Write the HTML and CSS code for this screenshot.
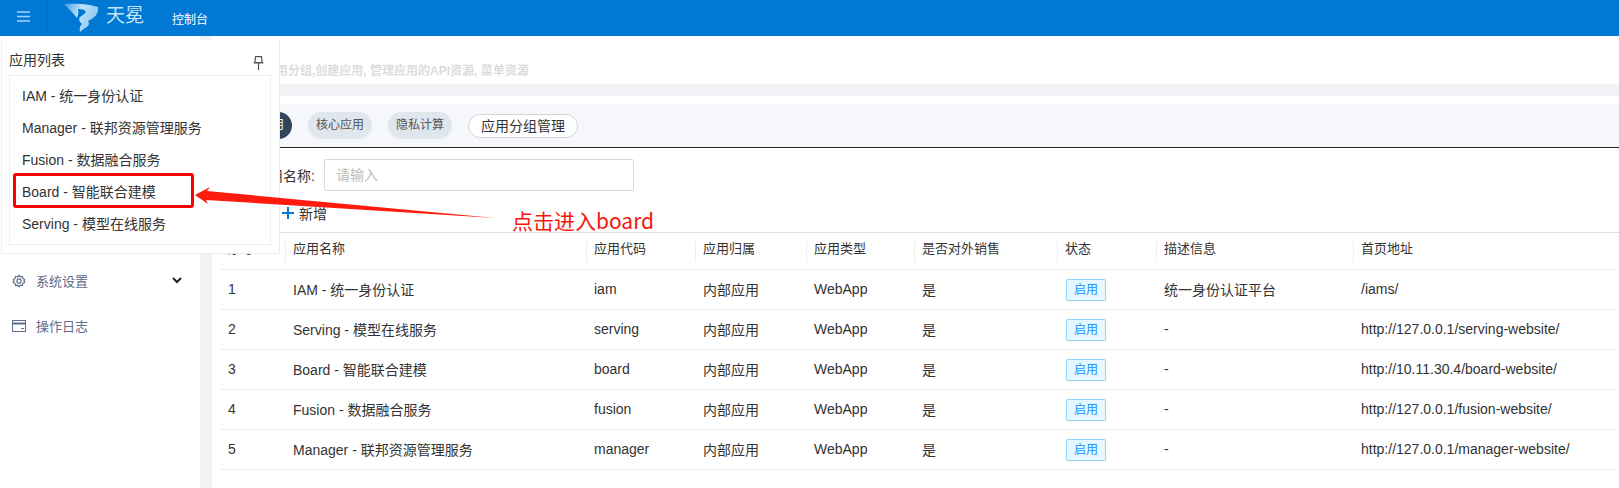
FILE: index.html
```html
<!DOCTYPE html>
<html lang="zh-CN">
<head>
    <meta charset="UTF-8">
    <title>应用管理</title>
    <link rel="stylesheet" href="styles.css">
</head>
<body>
    <header class="topbar">
        <div class="menu-btn">
            <svg width="13" height="11" viewBox="0 0 13 11"><path d="M0 1h13M0 5.500h13M0 10h13" stroke="#a9d3f3" stroke-width="1.300" fill="none"/></svg>
        </div>
        <div class="logo">
            <svg width="36" height="30" viewBox="0 0 36 30">
                <defs>
                    <linearGradient id="swirl" x1="0" y1="0" x2="1" y2="0.400">
                        <stop offset="0" stop-color="#3f9fe4"/>
                        <stop offset="0.500" stop-color="#bfe2f8"/>
                        <stop offset="1" stop-color="#8cc8f0"/>
                    </linearGradient>
                </defs>
                <path d="M0 1 C12 0 26 1 34 4 C35 10 31 15 24 18 C26 20 25 22 23 24 C20 26 18 27 16 29 C15 25 16 23 18 21 C16 19 14 17 16 14 C20 11 24 9 20 7 C18 6 16 6 14 6 C15 9 14 12 13 15 C9 10 4 5 0 1 Z" fill="url(#swirl)"/>
            </svg>
            <span class="logo-text">天冕</span>
        </div>
        <span class="console">控制台</span>
    </header>

    <div class="layout">
        <aside class="sidebar">
            <div class="side-item">
                <svg width="14" height="14" viewBox="0 0 24 24"><circle cx="12" cy="12" r="3.600" fill="none" stroke="#5f6c8c" stroke-width="2"/><path d="M12 2l2.200 3 3.600-.8 1 3.600 3.200 2-1.600 2.200 1.600 2.200-3.200 2-1 3.600-3.600-.8-2.200 3-2.200-3-3.600.8-1-3.600-3.200-2 1.600-2.200-1.600-2.200 3.200-2 1-3.600 3.600.8z" fill="none" stroke="#5f6c8c" stroke-width="2" stroke-linejoin="round"/></svg>
                <span>系统设置</span>
                <svg class="chev" width="10" height="7" viewBox="0 0 10 7"><path d="M1 1l4 4 4-4" fill="none" stroke="#222" stroke-width="2"/></svg>
            </div>
            <div class="side-item">
                <svg width="14" height="12" viewBox="0 0 14 12"><rect x=".5" y=".5" width="13" height="11" fill="none" stroke="#5f6c8c"/><path d="M0 3.500h14" stroke="#5f6c8c" stroke-width="2"/><path d="M9 8.500h3" stroke="#5f6c8c"/></svg>
                <span>操作日志</span>
            </div>
        </aside>

        <main class="content">
            <p class="desc">管理应用分组,创建应用, 管理应用的API资源, 菜单资源</p>
            <div class="band"></div>
            <div class="tabs">
                <span class="pill pill-active">全部应用</span>
                <span class="pill">核心应用</span>
                <span class="pill">隐私计算</span>
                <span class="pill-manage">应用分组管理</span>
            </div>
            <div class="search">
                <label>应用名称:</label>
                <div class="input">请输入</div>
            </div>
            <div class="toolbar">
                <svg width="12" height="12" viewBox="0 0 12 12"><path d="M6 0v12M0 6h12" stroke="#0078d4" stroke-width="2"/></svg>
                <span>新增</span>
            </div>
            <table class="app-table">
                <thead>
                    <tr>
                        <th class="c-no">序号</th><th class="c-name">应用名称</th><th class="c-code">应用代码</th><th class="c-own">应用归属</th><th class="c-type">应用类型</th><th class="c-sale">是否对外销售</th><th class="c-state">状态</th><th class="c-desc">描述信息</th><th>首页地址</th>
                    </tr>
                </thead>
                <tbody>
                    <tr><td>1</td><td>IAM - 统一身份认证</td><td>iam</td><td>内部应用</td><td>WebApp</td><td>是</td><td class="c-tag"><span class="tag">启用</span></td><td>统一身份认证平台</td><td>/iams/</td></tr>
                    <tr><td>2</td><td>Serving - 模型在线服务</td><td>serving</td><td>内部应用</td><td>WebApp</td><td>是</td><td class="c-tag"><span class="tag">启用</span></td><td>-</td><td>http://127.0.0.1/serving-website/</td></tr>
                    <tr><td>3</td><td>Board - 智能联合建模</td><td>board</td><td>内部应用</td><td>WebApp</td><td>是</td><td class="c-tag"><span class="tag">启用</span></td><td>-</td><td>http://10.11.30.4/board-website/</td></tr>
                    <tr><td>4</td><td>Fusion - 数据融合服务</td><td>fusion</td><td>内部应用</td><td>WebApp</td><td>是</td><td class="c-tag"><span class="tag">启用</span></td><td>-</td><td>http://127.0.0.1/fusion-website/</td></tr>
                    <tr><td>5</td><td>Manager - 联邦资源管理服务</td><td>manager</td><td>内部应用</td><td>WebApp</td><td>是</td><td class="c-tag"><span class="tag">启用</span></td><td>-</td><td>http://127.0.0.1/manager-website/</td></tr>
                </tbody>
            </table>
        </main>
    </div>

    <!-- 悬浮的应用列表 -->
    <div class="app-popup">
        <div class="popup-head">
            <span>应用列表</span>
            <svg class="pin" width="11" height="14" viewBox="0 0 11 14"><path d="M2.500 .7h6l.6 5.800H1.900zM.5 7h10M5.500 7v7" fill="none" stroke="#555" stroke-width="1.200"/></svg>
        </div>
        <ul class="popup-list">
            <li>IAM - 统一身份认证</li>
            <li>Manager - 联邦资源管理服务</li>
            <li>Fusion - 数据融合服务</li>
            <li>Board - 智能联合建模</li>
            <li>Serving - 模型在线服务</li>
        </ul>
    </div>

    <!-- 截图上的标注 -->
    <div class="mark-box"></div>
    <svg class="mark-arrow" width="302" height="36" viewBox="0 0 302 36">
        <path d="M0 10 L15 2 L12 6 L300 33 L11 15 L13 19 Z" fill="#ff1a0f"/>
    </svg>
    <span class="mark-text">点击进入board</span>
</body>
</html>
```

FILE: styles.css
```css
* {
    box-sizing: border-box;
}

body {
    margin: 0;
    height: 488px;
    overflow: hidden;
    font-family: "Liberation Sans", "Noto Sans CJK SC", sans-serif;
    font-size: 14px;
    color: #333;
    background: #fff;
}

.topbar {
    height: 36px;
    background: #0078d4;
    display: flex;
    align-items: center;
    box-shadow: 0 1px 3px rgba(0, 0, 0, 0.15);
}

.menu-btn {
    width: 48px;
    height: 36px;
    padding-bottom: 3px;
    display: flex;
    align-items: center;
    justify-content: center;
    border-right: 1px solid #0070c6;
}

.logo {
    display: flex;
    align-items: center;
    margin-left: 16px;
    width: 108px;
}

.logo-text {
    color: #c4e3f8;
    font-size: 19px;
    margin-left: 6px;
    margin-top: -10px;
}

.console {
    color: #fff;
    font-size: 12px;
}

.layout {
    display: flex;
    height: 452px;
    background: #f0f2f5;
}

.sidebar {
    width: 200px;
    padding-top: 222px;
    background: #fff;
}

.side-item {
    height: 45px;
    padding: 0 18px 0 12px;
    display: flex;
    align-items: center;
    gap: 10px;
    font-size: 13px;
    color: #5f6c8c;
}

.chev {
    margin-left: auto;
}

.content {
    flex: 1;
    margin-left: 12px;
    background: #fff;
}

.desc {
    margin: 0;
    height: 48px;
    padding: 25px 0 0 28px;
    font-size: 12px;
    font-weight: bold;
    color: #dcdcdc;
}

.band {
    height: 12px;
    background: #f0f2f5;
}

.tabs {
    margin-top: 8px;
    height: 44px;
    padding-left: 16px;
    background: #f5f7fa;
    border-bottom: 1px solid #222;
    display: flex;
    align-items: center;
    gap: 16px;
}

.pill {
    height: 27px;
    line-height: 27px;
    padding: 0 8px;
    font-size: 12px;
    border-radius: 14px;
    background: #dfe6ed;
    color: #555;
}

.pill-active {
    background: #33455d;
    color: #fff;
}

.pill-manage {
    height: 24px;
    line-height: 22px;
    padding: 0 12px;
    border: 1px solid #d5d5d5;
    border-radius: 12px;
    background: #fff;
    color: #333;
}

.search {
    display: flex;
    align-items: center;
    height: 32px;
    margin-top: 11px;
    padding-left: 43px;
}

.search label {
    width: 69px;
}

.input {
    width: 310px;
    height: 32px;
    line-height: 30px;
    padding-left: 11px;
    border: 1px solid #d9d9d9;
    border-radius: 2px;
    color: #bbb;
}

.toolbar {
    height: 41px;
    padding: 3px 0 0 70px;
    display: flex;
    align-items: center;
    gap: 5px;
}

.app-table {
    width: 1399px;
    margin-left: 8px;
    table-layout: fixed;
    border-collapse: collapse;
    border-top: 1px solid #ddd;
}

.app-table th {
    height: 37px;
    padding: 0 0 8px 8px;
    text-align: left;
    font-size: 13px;
    font-weight: normal;
    border-bottom: 1px solid #eee;
    background: linear-gradient(#eee, #eee) no-repeat left center / 1px 21px;
}

.app-table th.c-no {
    background: none;
}

.app-table td {
    height: 40px;
    padding: 0 0 2px 8px;
    border-bottom: 1px solid #eee;
}

.app-table td.c-tag {
    padding-bottom: 0;
}

.c-no { width: 65px; }
.c-name { width: 301px; }
.c-code { width: 109px; }
.c-own { width: 111px; }
.c-type { width: 108px; }
.c-sale { width: 143px; }
.c-state { width: 99px; }
.c-desc { width: 197px; }

.tag {
    display: inline-block;
    width: 40px;
    height: 22px;
    margin-left: 1px;
    line-height: 20px;
    text-align: center;
    font-size: 12px;
    color: #1890ff;
    background: #e6f7ff;
    border: 1px solid #91d5ff;
    border-radius: 2px;
}

.app-popup {
    position: absolute;
    left: 1px;
    top: 40px;
    width: 279px;
    height: 214px;
    padding: 0 8px 0 7px;
    background: #fff;
    border: 1px solid #eee;
    border-top: 0;
}

.popup-head {
    height: 35px;
    padding: 2px 7px 0 0;
    display: flex;
    align-items: center;
    justify-content: space-between;
}

.pin {
    margin-top: 9px;
}

.popup-list {
    list-style: none;
    margin: 0;
    padding: 4px 0;
    height: 170px;
    border: 1px solid #eee;
}

.popup-list li {
    height: 32px;
    line-height: 32px;
    padding-left: 12px;
}

.mark-box {
    position: absolute;
    left: 13px;
    top: 173px;
    width: 181px;
    height: 35px;
    border: 3px solid #ff0000;
    border-radius: 3px;
}

.mark-arrow {
    position: absolute;
    left: 195px;
    top: 185px;
}

.mark-text {
    position: absolute;
    left: 512px;
    top: 205px;
    font-family: "Noto Sans CJK SC", sans-serif;
    font-size: 21px;
    line-height: 30px;
    color: #f5170e;
}
```
